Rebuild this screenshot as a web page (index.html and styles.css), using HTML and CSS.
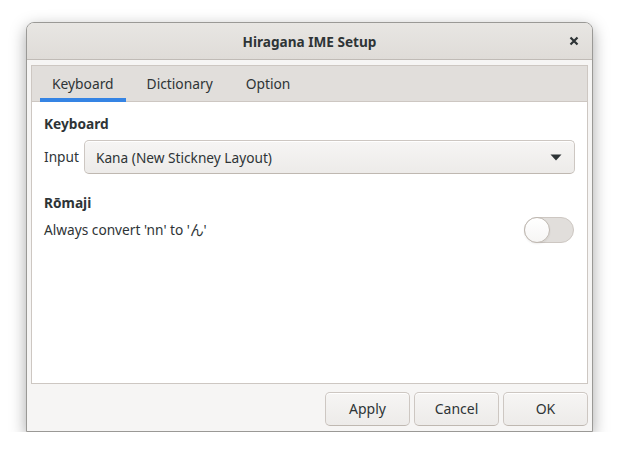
FILE: index.html
```html
<!DOCTYPE html>
<html>
<head>
<meta charset="utf-8">
<link rel="stylesheet" href="styles.css">
</head>
<body>
<div class="window">
  <div class="titlebar">
    <span class="title">Hiragana IME Setup</span>
    <span class="close"><svg width="10" height="10" viewBox="0 0 10 10"><path d="M1.5 1.5 L8.5 8.5 M8.5 1.5 L1.5 8.5" stroke="#2e3436" stroke-width="2.2" stroke-linecap="butt"/></svg></span>
  </div>
  <div class="content">
    <div class="notebook">
      <div class="tabs">
        <div class="tab active">Keyboard</div>
        <div class="tab">Dictionary</div>
        <div class="tab">Option</div>
      </div>
      <div class="page">
        <div class="heading">Keyboard</div>
        <div class="row input-row">
          <span class="label">Input</span>
          <div class="combo">
            <span>Kana (New Stickney Layout)</span>
            <svg class="arrow" width="12" height="7" viewBox="0 0 12 7"><path d="M0.5 0.5 H11.5 L6 6.5 Z" fill="#2e3436"/></svg>
          </div>
        </div>
        <div class="heading heading2">Rōmaji</div>
        <div class="row switch-row">
          <span class="label">Always convert 'nn' to 'ん'</span>
          <div class="switch"><div class="knob"></div></div>
        </div>
      </div>
    </div>
    <div class="buttons">
      <div class="btn">Apply</div>
      <div class="btn">Cancel</div>
      <div class="btn">OK</div>
    </div>
  </div>
</div>
</body>
</html>
```
FILE: styles.css
```css
* { box-sizing: border-box; }
html, body { margin: 0; padding: 0; background: #ffffff; }
body {
  padding: 22px 0 0 26px;
  font-family: "Noto Sans", "Noto Sans CJK JP", sans-serif;
  font-size: 13.7px;
  color: #2e3436;
}
.window {
  width: 567px;
  height: 410px;
  border: 1px solid #9a9996;
  border-radius: 8px 8px 0 0;
  display: flex;
  flex-direction: column;
  background: #f6f5f4;
  box-shadow: 0 5px 16px rgba(0,0,0,0.35);
}
.titlebar {
  height: 37px;
  flex: none;
  border-bottom: 1px solid #c0bbb6;
  background: linear-gradient(#e8e6e3, #dfdcd8);
  border-radius: 7px 7px 0 0;
  display: flex;
  align-items: center;
  justify-content: center;
  position: relative;
}
.title { font-weight: bold; font-size: 13.6px; }
.close {
  position: absolute;
  right: 13px;
  top: 13px;
  width: 10px;
  height: 10px;
  display: flex;
}
.content {
  flex: 1;
  padding: 5px 4px 5px 4px;
  display: flex;
  flex-direction: column;
}
.notebook {
  height: 319px;
  border: 1px solid #cdc7c2;
  display: flex;
  flex-direction: column;
  background: #ffffff;
}
.tabs {
  height: 36px;
  background: #e1dedb;
  display: flex;
  padding-left: 8px;
  gap: 9px;
  border-bottom: 1px solid #cdc7c2;
}
.tab {
  padding: 0 12px 2px 12px;
  display: flex;
  align-items: center;
  height: 36px;
  margin-bottom: -1px;
  color: #2e3436;
  font-size: 13.8px;
}
.tab.active { box-shadow: inset 0 -4px 0 #3584e4; }
.page {
  flex: 1;
  padding: 12px 12px 0 12px;
}
.heading { font-weight: bold; line-height: 20px; }
.row { display: flex; align-items: center; }
.input-row { margin-top: 6px; gap: 5px; }
.label { line-height: 20px; }
.combo {
  flex: 1;
  height: 34px;
  border: 1px solid #cdc7c2;
  border-bottom-color: #bfb8b1;
  border-radius: 5px;
  background: linear-gradient(#f6f5f4, #edebe9);
  box-shadow: inset 0 1px #ffffff;
  display: flex;
  align-items: center;
  justify-content: space-between;
  padding: 0 12px 0 11px;
}
.arrow { margin-top: 1px; }
.heading2 { margin-top: 19px; }
.switch-row { margin-top: 4px; justify-content: space-between; padding-right: 1px; }
.switch {
  width: 50px;
  height: 26px;
  border: 1px solid #cdc7c2;
  border-radius: 14px;
  background: #e1dedb;
  display: flex;
  align-items: center;
}
.knob {
  width: 26px;
  height: 26px;
  margin-left: -1px;
  border-radius: 50%;
  border: 1px solid #bfb8b1;
  background: linear-gradient(#ffffff, #f6f5f4);
  box-shadow: 0 1px 2px rgba(0,0,0,0.07);
}
.buttons {
  margin-top: 8px;
  display: flex;
  justify-content: flex-end;
  gap: 4px;
}
.btn {
  width: 85px;
  height: 34px;
  padding-bottom: 2px;
  border: 1px solid #cdc7c2;
  border-bottom-color: #bfb8b1;
  border-radius: 5px;
  background: linear-gradient(#f6f5f4, #edebe9);
  box-shadow: inset 0 1px #ffffff;
  display: flex;
  align-items: center;
  justify-content: center;
  font-size: 14px;
}
```
